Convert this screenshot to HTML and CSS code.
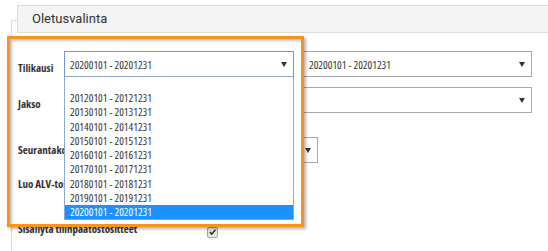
FILE: index.html
```html
<!DOCTYPE html>
<html lang="fi">
<head>
<meta charset="utf-8">
<title>Oletusvalinta</title>
<link rel="stylesheet" href="styles.css">
</head>
<body>
<section class="panel">
  <h2 class="panel-head">Oletusvalinta</h2>
  <div class="form">
    <div class="row r1">
      <label class="lbl front low">Tilikausi</label>
      <div class="select open">
        <span class="val">20200101 - 20201231</span><span class="arrow"></span>
        <ul class="options">
          <li class="empty"></li>
          <li>20120101 - 20121231</li>
          <li>20130101 - 20131231</li>
          <li>20140101 - 20141231</li>
          <li>20150101 - 20151231</li>
          <li>20160101 - 20161231</li>
          <li>20170101 - 20171231</li>
          <li>20180101 - 20181231</li>
          <li>20190101 - 20191231</li>
          <li class="sel">20200101 - 20201231</li>
        </ul>
      </div>
      <div class="select s2"><span class="val">20200101 - 20201231</span><span class="arrow"></span></div>
    </div>
    <div class="row r2">
      <label class="lbl front low">Jakso</label>
      <div class="select wide"><span class="val"></span><span class="arrow"></span></div>
    </div>
    <div class="row r3">
      <label class="lbl front">Seurantakohde</label>
      <div class="select mid"><span class="val"></span><span class="arrow"></span></div>
    </div>
    <div class="row r4">
      <label class="lbl front">Luo ALV-tositteet</label>
      <span class="cb"></span>
    </div>
    <div class="row r5">
      <label class="lbl long up">Sisällytä tilinpäätöstositteet</label>
      <span class="cb"><svg viewBox="0 0 10 10" width="10" height="10"><path d="M2 5.2 L4.2 7.4 L8.2 2.4" fill="none" stroke="#333" stroke-width="1.8"/></svg></span>
    </div>
  </div>
</section>
<div class="callout"></div>
</body>
</html>
```
FILE: styles.css
```css
html, body {
  margin: 0;
  padding: 0;
  background: #fff;
}
body {
  width: 548px;
  height: 251px;
  overflow: hidden;
  font-family: "Open Sans", "Liberation Sans", sans-serif;
  font-stretch: 84%;
  color: #333;
}
.panel {
  margin: 20px 0 0 11px;
  border-top: 1px solid #ddd;
  border-left: 1px solid #ddd;
  height: 240px;
}
.panel-head {
  margin: -16px 0 0 5px;
  height: 26px;
  line-height: 26px;
  border: 1px solid #ddd;
  border-right: 0;
  background: #f5f5f5;
  padding-left: 14px;
  font-family: Roboto, sans-serif;
  font-stretch: normal;
  font-size: 13px;
  font-weight: 400;
  color: #333;
}
.form {
  padding: 18px 0 0 6px;
}
.row {
  display: flex;
  align-items: center;
  height: 26px;
}
.r2 { margin-top: 10px; }
.r3 { margin-top: 24px; }
.r4 { margin-top: 8px; }
.r5 { margin-top: 22px; }
.lbl {
  width: 46px;
  flex: none;
  font-weight: 700;
  font-size: 11px;
  line-height: 14px;
  white-space: nowrap;
  color: #333;
}
.lbl.low { padding-top: 7px; }
.lbl.up { padding-bottom: 7px; }
.lbl.long { width: 189px; }
.front {
  position: relative;
  z-index: 2;
}
.select {
  box-sizing: border-box;
  height: 26px;
  border: 1px solid #aaa;
  background: #fff;
  display: flex;
  align-items: center;
  padding: 0 6px 0 5px;
  font-size: 11px;
  flex: none;
}
.select .val { flex: 1; white-space: nowrap; }
.arrow {
  width: 0;
  height: 0;
  border-left: 3px solid transparent;
  border-right: 3px solid transparent;
  border-top: 5px solid #333;
}
.select.open {
  width: 230px;
  border-color: #7596d2;
  position: relative;
  z-index: 3;
}
.s2 { width: 229px; margin-left: 9px; }
.wide { width: 468px; }
.mid { width: 254px; }
.options {
  position: absolute;
  left: -1px;
  top: 100%;
  width: 230px;
  box-sizing: border-box;
  margin: 0;
  padding: 0;
  list-style: none;
  border: 1px solid #8ea7da;
  background: #fff;
}
.options li {
  height: 14.25px;
  line-height: 14.25px;
  padding-left: 5px;
  white-space: nowrap;
  color: #333;
}
.options li.empty { height: 14px; }
.options li.sel {
  background: #1e90ff;
  color: #fff;
}
.cb {
  box-sizing: border-box;
  width: 11px;
  height: 11px;
  border: 1px solid #a6a6a6;
  border-radius: 2px;
  background: #e6e6e6;
  display: flex;
  align-items: center;
  justify-content: center;
}
.cb svg { display: block; }
.callout {
  position: absolute;
  left: 7px;
  top: 36px;
  width: 297px;
  height: 191px;
  box-sizing: border-box;
  border: 3px solid #f7941d;
  background: #fff;
  z-index: 1;
  box-shadow: 2px 2px 3px rgba(0, 0, 0, 0.3), inset 2px 2px 3px rgba(0, 0, 0, 0.25);
}
```
